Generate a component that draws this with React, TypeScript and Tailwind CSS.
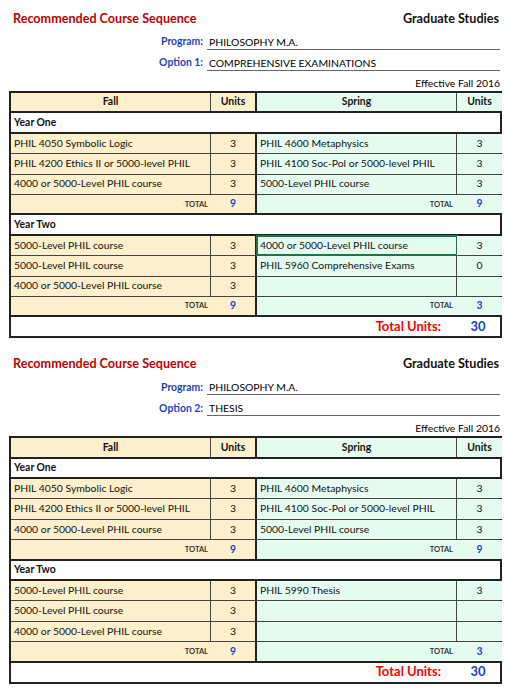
import type { ReactNode } from "react";

type Row = { fall: string; fu: string; spring: string; su: string; sel?: boolean };

type Sheet = {
  option: string;
  value: string;
  y1: Row[];
  y1Fall: string;
  y1Spring: string;
  y2: Row[];
  y2Fall: string;
  y2Spring: string;
  total: string;
};

const sheets: Sheet[] = [
  {
    option: "Option 1:",
    value: "COMPREHENSIVE EXAMINATIONS",
    y1: [
      { fall: "PHIL 4050 Symbolic Logic", fu: "3", spring: "PHIL 4600 Metaphysics", su: "3" },
      { fall: "PHIL 4200 Ethics II or 5000-level PHIL", fu: "3", spring: "PHIL 4100 Soc-Pol or 5000-level PHIL", su: "3" },
      { fall: "4000 or 5000-Level PHIL course", fu: "3", spring: "5000-Level PHIL course", su: "3" },
    ],
    y1Fall: "9",
    y1Spring: "9",
    y2: [
      { fall: "5000-Level PHIL course", fu: "3", spring: "4000 or 5000-Level PHIL course", su: "3", sel: true },
      { fall: "5000-Level PHIL course", fu: "3", spring: "PHIL 5960 Comprehensive Exams", su: "0" },
      { fall: "4000 or 5000-Level PHIL course", fu: "3", spring: "", su: "" },
    ],
    y2Fall: "9",
    y2Spring: "3",
    total: "30",
  },
  {
    option: "Option 2:",
    value: "THESIS",
    y1: [
      { fall: "PHIL 4050 Symbolic Logic", fu: "3", spring: "PHIL 4600 Metaphysics", su: "3" },
      { fall: "PHIL 4200 Ethics II or 5000-level PHIL", fu: "3", spring: "PHIL 4100 Soc-Pol or 5000-level PHIL", su: "3" },
      { fall: "4000 or 5000-Level PHIL course", fu: "3", spring: "5000-Level PHIL course", su: "3" },
    ],
    y1Fall: "9",
    y1Spring: "9",
    y2: [
      { fall: "5000-Level PHIL course", fu: "3", spring: "PHIL 5990 Thesis", su: "3" },
      { fall: "5000-Level PHIL course", fu: "3", spring: "", su: "" },
      { fall: "4000 or 5000-Level PHIL course", fu: "3", spring: "", su: "" },
    ],
    y2Fall: "9",
    y2Spring: "3",
    total: "30",
  },
];

const FALL = "bg-[#fcefcb]";
const SPRING = "bg-[#e6fbf0]";
const COLS = "grid grid-cols-[200px_46px_200px_45px]";

function Cell({ children, className }: { children?: ReactNode; className?: string }) {
  return <div className={`flex items-center h-full ${className || ""}`}>{children}</div>;
}

function DataRow({ row }: { row: Row }) {
  return (
    <div className={`${COLS} h-[20.4px] border-b border-[#444]`}>
      <Cell className={`${FALL} pl-[3px] border-r border-[#444]`}>{row.fall}</Cell>
      <Cell className={`${FALL} justify-center border-r-2 border-[#222]`}>{row.fu}</Cell>
      <Cell
        className={`${SPRING} pl-[3px] border-r border-[#444] ${
          row.sel ? "outline outline-2 -outline-offset-1 outline-[#217346]" : ""
        }`}
      >
        {row.spring}
      </Cell>
      <Cell className={`${SPRING} justify-center`}>{row.su}</Cell>
    </div>
  );
}

function TotalRow({ fall, spring }: { fall: string; spring: string }) {
  return (
    <div className={`${COLS} h-[20.4px] border-b-2 border-[#222]`}>
      <Cell className={`${FALL} justify-end pr-[3px] text-[7.5px] font-bold text-[#333]`}>TOTAL</Cell>
      <Cell className={`${FALL} justify-center font-bold text-[#1a3fd0] border-r-2 border-[#222]`}>{fall}</Cell>
      <Cell className={`${SPRING} justify-end pr-[4px] text-[7.5px] font-bold text-[#333]`}>TOTAL</Cell>
      <Cell className={`${SPRING} justify-center font-bold text-[#1a3fd0]`}>{spring}</Cell>
    </div>
  );
}

function YearRow({ label }: { label: string }) {
  return (
    <div className="h-[20.4px] flex items-center pl-[3px] font-bold bg-white border-b-2 border-[#222]">
      {label}
    </div>
  );
}

function SheetBlock({ s }: { s: Sheet }) {
  return (
    <section className="w-[493px]">
      <div className="flex justify-between items-end h-[17px] mt-[12px] font-bold text-[12.6px]">
        <span className="pl-[4px] text-[#c00000]">Recommended Course Sequence</span>
        <span className="pr-[3px] text-[#111]">Graduate Studies</span>
      </div>
      <div className="flex items-end h-[16px] mt-[5px] text-[10.4px]">
        <span className="w-[198px] text-right pr-[4px] font-bold text-[#1f3fbf]">Program:</span>
        <span className="flex-1 border-b border-[#666] pl-[2px] mr-[2px] leading-[14px]">PHILOSOPHY M.A.</span>
      </div>
      <div className="flex items-end h-[16px] mt-[5px] text-[10.4px]">
        <span className="w-[198px] text-right pr-[4px] font-bold text-[#1f3fbf]">{s.option}</span>
        <span className="flex-1 border-b border-[#666] pl-[2px] mr-[2px] leading-[14px]">{s.value}</span>
      </div>
      <div className="text-right text-[10.4px] pr-[2px] mt-[5px] h-[15px] leading-[15px]">Effective Fall 2016</div>
      <div className="border-2 border-[#222] text-[10.4px] text-[#111]">
        <div className={`${COLS} h-[20.4px] border-b-2 border-[#222] font-bold`}>
          <Cell className={`${FALL} justify-center border-r border-[#444]`}>Fall</Cell>
          <Cell className={`${FALL} justify-center border-r-2 border-[#222]`}>Units</Cell>
          <Cell className={`${SPRING} justify-center border-r border-[#444]`}>Spring</Cell>
          <Cell className={`${SPRING} justify-center`}>Units</Cell>
        </div>
        <YearRow label="Year One" />
        {s.y1.map((r, i) => (
          <DataRow key={i} row={r} />
        ))}
        <TotalRow fall={s.y1Fall} spring={s.y1Spring} />
        <YearRow label="Year Two" />
        {s.y2.map((r, i) => (
          <DataRow key={i} row={r} />
        ))}
        <TotalRow fall={s.y2Fall} spring={s.y2Spring} />
        <div className="h-[19px] flex items-center justify-end bg-white font-bold text-[13px]">
          <span className="text-[#ff0000] mr-[15px]">Total Units:</span>
          <span className="w-[44px] text-center text-[#1a3fd0]">{s.total}</span>
        </div>
      </div>
    </section>
  );
}

export default function App() {
  return (
    <main
      className="min-h-screen bg-white pl-[9px] flex flex-col gap-[7px]"
      style={{ fontFamily: "Lato, 'Open Sans', 'Liberation Sans', sans-serif" }}
    >
      {sheets.map((s, i) => (
        <SheetBlock key={i} s={s} />
      ))}
    </main>
  );
}
